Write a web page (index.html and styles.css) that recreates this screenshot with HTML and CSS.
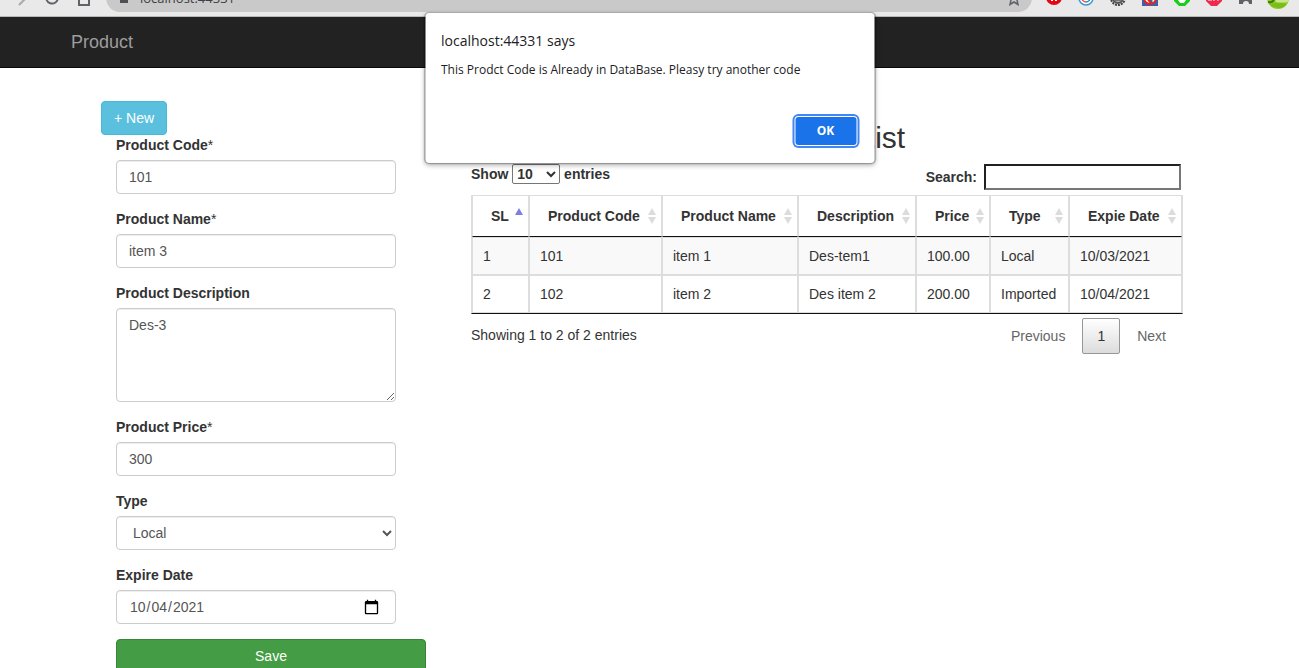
FILE: index.html
```html
<!DOCTYPE html>
<html lang="en">
<head>
<meta charset="utf-8">
<title>Product</title>
<link rel="stylesheet" href="styles.css">
</head>
<body>
<svg class="defs" aria-hidden="true">
  <symbol id="sort" viewBox="0 0 10 16"><path d="M5 0l4 7H1zM5 16l4-7H1z"/></symbol>
  <symbol id="sort-asc" viewBox="0 0 10 16"><path d="M5 0l4 7H1z"/></symbol>
</svg>

<div class="toolbar">
  <div class="toolbar-row">
    <button class="tool" aria-label="Forward"><svg viewBox="0 0 16 16" fill="none" stroke="#a9a9ab" stroke-width="2"><path d="M0 8h14M7 1l7 7-7 7"/></svg></button>
    <button class="tool" aria-label="Reload"><svg viewBox="0 0 16 16" fill="none" stroke="#5f6368" stroke-width="2"><path d="M14 8a6 6 0 1 1-2-5M14 0v5H9"/></svg></button>
    <button class="tool" aria-label="Home"><svg viewBox="0 0 16 16" fill="none" stroke="#5f6368" stroke-width="2"><path d="M0 7l8-6 8 6M3 6v9h10V6"/></svg></button>
    <div class="omnibox">
      <svg class="lock" viewBox="0 0 16 16"><path fill="#4c4f54" d="M4 5h8v8H4z"/><path d="M5 6V3a3 3 0 0 1 6 0v3" fill="none" stroke="#4c4f54" stroke-width="2"/></svg>
      <input class="url" type="text" aria-label="Address" value="localhost:44331">
      <button class="star" aria-label="Bookmark"><svg viewBox="0 0 16 16" fill="none" stroke="#5f6368" stroke-width="1.5"><path d="M8 1l2 5 5 1-4 3 1 4.500-4-2.500-4 2.500 1-4.500-4-3 5-1z"/></svg></button>
    </div>
    <div class="extensions">
      <button class="tool" aria-label="Blocker"><svg viewBox="0 0 16 16"><circle cx="8" cy="7" r="8" fill="#e30613"/><path d="M5 10h2v1H5zM9 10h2v1H9z" fill="#fff"/></svg></button>
      <button class="tool" aria-label="Refresh tool"><svg viewBox="0 0 16 16"><circle cx="8" cy="8" r="7" fill="#fff" stroke="#3b97d3" stroke-width="1.500"/><path d="M4 8a4 4 0 0 0 4 4" fill="none" stroke="#e2574c" stroke-width="1.500"/><path d="M12 8a4 4 0 0 1-4 4" fill="none" stroke="#2d83bd" stroke-width="1.500"/></svg></button>
      <button class="tool" aria-label="Settings"><svg viewBox="0 0 16 16"><circle cx="8" cy="8" r="7" fill="none" stroke="#444" stroke-width="2" stroke-dasharray="2 1"/><circle cx="8" cy="8" r="5" fill="#bbb" stroke="#555" stroke-width="2"/><path d="M5 10h6" stroke="#333"/></svg></button>
      <button class="tool" aria-label="Flag"><svg viewBox="0 0 16 16"><path fill="#3f5fa8" d="M0 0h16v16H0z"/><circle cx="8" cy="8" r="6" fill="#fff" stroke="#e8231c" stroke-width="2"/><path d="M9 3v10" stroke="#2a6fb5" stroke-width="3"/><path d="M4 7l5 6" stroke="#e8231c" stroke-width="2"/></svg></button>
      <button class="tool" aria-label="Download"><svg viewBox="0 0 16 16"><path fill="#14d016" d="M5 0h6l5 5v6l-5 5H5l-5-5V5z"/><path fill="#fff" d="M4 4h8v6l-2 3H6l-2-3z"/></svg></button>
      <button class="tool" aria-label="Ad filter"><svg viewBox="0 0 16 16"><path fill="#f0284c" d="M5 0h6l5 5v6l-5 5H5l-5-5V5z"/><path d="M3 11V7h2v4M7 7v3h2V7M11 7v3h2V7" stroke="#fff" fill="none"/></svg></button>
      <button class="tool" aria-label="Extensions"><svg viewBox="0 0 16 16"><path fill="#5f6368" d="M2 2h4a2 2 0 0 1 4 0h4v4a2 2 0 0 1 0 4v4h-3a3 3 0 0 0-6 0H1v-4a2 2 0 0 0 1-4z"/></svg></button>
      <button class="tool" aria-label="Profile"><svg class="avatar" viewBox="0 0 22 22"><circle cx="11" cy="11" r="11" fill="#8ccb1f"/><path d="M8 12h14l-1 3q-7 1-12 0z" fill="#c8e890"/><path d="M1 15q5 1 6-3" fill="none" stroke="#3d7a14" stroke-width="2"/><path d="M2 17q9-2 18 0-8 8-18 0z" fill="#7dbb1b"/></svg></button>
    </div>
  </div>
</div>

<nav class="navbar">
  <div class="container"><a class="brand" href="#">Product</a></div>
</nav>

<main class="container content">
  <section class="form-column">
    <button class="btn btn-info" type="button">+ New</button>
    <form class="product-form">
      <div class="form-group">
        <label for="code">Product Code<span class="required">*</span></label>
        <input class="form-control" id="code" type="text" value="101">
      </div>
      <div class="form-group">
        <label for="name">Product Name<span class="required">*</span></label>
        <input class="form-control" id="name" type="text" value="item 3">
      </div>
      <div class="form-group">
        <label for="description">Product Description</label>
        <textarea class="form-control" id="description" rows="4">Des-3</textarea>
      </div>
      <div class="form-group">
        <label for="price">Product Price<span class="required">*</span></label>
        <input class="form-control" id="price" type="text" value="300">
      </div>
      <div class="form-group">
        <label for="type">Type</label>
        <select class="form-control" id="type"><option>Local</option><option>Imported</option></select>
      </div>
      <div class="form-group">
        <label for="expire">Expire Date</label>
        <input class="form-control" id="expire" type="date" value="2021-10-04">
      </div>
      <button class="btn btn-success" type="button">Save</button>
    </form>
  </section>

  <section class="list-column">
    <h2>Product List</h2>
    <div class="table-tools">
      <label class="length">Show
        <select><option>10</option><option>25</option><option>50</option><option>100</option></select>
        entries</label>
      <label class="search">Search:<input type="search"></label>
    </div>
    <table>
      <colgroup><col class="c-sl"><col class="c-code"><col class="c-name"><col class="c-desc"><col class="c-price"><col class="c-type"><col class="c-date"></colgroup>
      <thead>
        <tr>
          <th>SL<svg class="sort active"><use href="#sort-asc"/></svg></th>
          <th>Product Code<svg class="sort"><use href="#sort"/></svg></th>
          <th>Product Name<svg class="sort"><use href="#sort"/></svg></th>
          <th>Description<svg class="sort"><use href="#sort"/></svg></th>
          <th>Price<svg class="sort"><use href="#sort"/></svg></th>
          <th>Type<svg class="sort"><use href="#sort"/></svg></th>
          <th>Expie Date<svg class="sort"><use href="#sort"/></svg></th>
        </tr>
      </thead>
      <tbody>
        <tr><td>1</td><td>101</td><td>item 1</td><td>Des-tem1</td><td>100.00</td><td>Local</td><td>10/03/2021</td></tr>
        <tr><td>2</td><td>102</td><td>item 2</td><td>Des item 2</td><td>200.00</td><td>Imported</td><td>10/04/2021</td></tr>
      </tbody>
    </table>
    <div class="table-footer">
      <div class="info">Showing 1 to 2 of 2 entries</div>
      <div class="pagination">
        <a class="page" href="#">Previous</a>
        <a class="page current" href="#">1</a>
        <a class="page" href="#">Next</a>
      </div>
    </div>
  </section>
</main>

<div class="alert" role="alertdialog" aria-labelledby="alert-title" aria-describedby="alert-text">
  <div class="alert-title" id="alert-title">localhost:44331 says</div>
  <div class="alert-text" id="alert-text">This Prodct Code is Already in DataBase. Pleasy try another code</div>
  <button class="alert-ok" type="button">OK</button>
</div>
</body>
</html>
```
FILE: styles.css
```css
* { box-sizing: border-box; }

body {
  margin: 0;
  height: 100vh;
  overflow: hidden;
  position: relative;
  background: #fff;
  color: #333;
  font: 14px/20px "Liberation Sans", Arial, sans-serif;
}

button, input, select, textarea { font: inherit; }
a { text-decoration: none; }
.defs { display: none; }

/* Browser toolbar, scrolled so that only its lower edge shows */
.toolbar {
  display: flex;
  align-items: flex-end;
  height: 17px;
  padding: 0 5px 4px 4px;
  overflow: hidden;
  background: #e9e9e9;
  border-bottom: 1px solid #b9b9b9;
}
.toolbar-row {
  display: flex;
  flex: 1;
  align-items: center;
  height: 28px;
}
.tool {
  display: flex;
  justify-content: center;
  align-items: center;
  width: 32px;
  height: 28px;
  padding: 0;
  border: 0;
  background: none;
}
.tool svg, .star svg, .lock { width: 16px; height: 16px; }
.tool .avatar { width: 22px; height: 22px; }
.extensions { display: flex; }
.omnibox {
  display: flex;
  flex: 1;
  align-items: center;
  height: 28px;
  margin: 0 6px;
  padding: 0 10px;
  border-radius: 14px;
  background: #c9c9c9;
}
.url {
  flex: 1;
  min-width: 0;
  margin-left: 8px;
  padding: 0;
  border: 0;
  background: none;
  color: #3c3f43;
  font: 13px/20px "Open Sans", sans-serif;
}
.star { display: flex; padding: 0; border: 0; background: none; }

.navbar {
  height: 51px;
  padding-right: 17px;
  background: #222;
  border-bottom: 1px solid #080808;
}
.container {
  max-width: 1170px;
  margin: 0 auto;
  padding: 0 15px;
}
.brand {
  display: inline-block;
  padding: 15px 0;
  color: #9d9d9d;
  font-size: 18px;
}

.content {
  display: flex;
  gap: 30px;
  max-width: 1187px;
  padding: 33px 62px 0 45px;
}
.form-column { flex: 0 0 340px; }
.list-column { flex: 1; min-width: 0; }

.btn {
  display: block;
  padding: 6px 12px;
  border: 1px solid;
  border-radius: 4px;
  color: #fff;
}
.btn-info { background: #5bc0de; border-color: #46b8da; }
.btn-success { width: 100%; background: #449d44; border-color: #398439; }

.product-form { padding: 0 15px; }
.form-group { margin-bottom: 15px; }
label { font-weight: bold; }
.form-group label { display: block; margin-bottom: 5px; }
.required { font-weight: normal; }
.form-control {
  display: block;
  width: 100%;
  max-width: 280px;
  height: 34px;
  padding: 6px 12px;
  border: 1px solid #ccc;
  border-radius: 4px;
  background: #fff;
  color: #555;
  box-shadow: inset 0 1px 1px rgba(0, 0, 0, .075);
}
textarea.form-control { height: auto; }
.form-control::-webkit-calendar-picker-indicator {
  width: 17px;
  height: 17px;
  margin-right: 1px;
}

h2 {
  margin: 20px 0 10px;
  text-align: center;
  font-size: 30px;
  font-weight: 500;
  line-height: 33px;
}
.table-tools {
  display: flex;
  justify-content: space-between;
  align-items: flex-start;
  margin-bottom: 5px;
}
.length select {
  width: 48px;
  height: 20px;
  padding: 0;
  border: 1px solid #767676;
  border-radius: 2px;
  background: #fff;
  color: #333;
}
.search { display: flex; align-items: center; gap: 7px; }
.search input {
  width: 197px;
  height: 26px;
  border: 2px inset #767676;
  background: #fff;
}

table {
  box-sizing: content-box;
  width: 100%;
  border: 1px solid #ddd;
  border-bottom-color: #111;
  border-collapse: separate;
  border-spacing: 0;
}
.c-sl { width: 57px; }
.c-code { width: 133px; }
.c-name { width: 136px; }
.c-desc { width: 118px; }
.c-price { width: 74px; }
.c-type { width: 79px; }
.c-date { width: 113px; }
th, td { text-align: left; white-space: nowrap; }
th {
  position: relative;
  padding: 10px 18px;
  border: 1px solid #ddd;
  border-top: 0;
  border-bottom-color: #111;
}
td { padding: 8px 10px; border: 1px solid #ddd; }
tbody tr:nth-child(odd) { background: #f9f9f9; }
.sort {
  position: absolute;
  top: 12px;
  right: 4px;
  width: 10px;
  height: 16px;
  fill: #dcdcdc;
}
.sort.active { fill: #7b80e0; }

.table-footer { display: flex; justify-content: space-between; }
.info { padding-top: 11px; }
.pagination { display: flex; gap: 2px; padding-top: 4px; }
.page {
  padding: 7px 14px;
  border: 1px solid transparent;
  border-radius: 2px;
  color: #666;
}
.page.current {
  border-color: #979797;
  background: linear-gradient(#fff, #dcdcdc);
  color: #333;
}

/* Native alert floating over the page */
.alert {
  position: absolute;
  top: 13px;
  left: 50%;
  width: 449px;
  display: flex;
  flex-direction: column;
  padding: 16px;
  border-radius: 4px;
  background: #fff;
  color: #202124;
  box-shadow: 0 0 1px 1px rgba(0, 0, 0, .25), 0 2px 5px rgba(0, 0, 0, .35);
  transform: translateX(-50%);
  font-family: "Open Sans", "Noto Sans", sans-serif;
}
.alert-title { padding: 2px 0; font-size: 14px; }
.alert-text { margin-top: 7px; font-size: 12px; }
.alert-ok {
  align-self: flex-end;
  width: 61px;
  height: 28px;
  margin: 37px 2px 2px;
  padding: 0;
  border: 0;
  border-radius: 3px;
  background: #1a73e8;
  color: #fff;
  font-size: 12px;
  font-weight: bold;
  box-shadow: 0 0 0 1px #fff, 0 0 0 3px #4285f4;
}
```
